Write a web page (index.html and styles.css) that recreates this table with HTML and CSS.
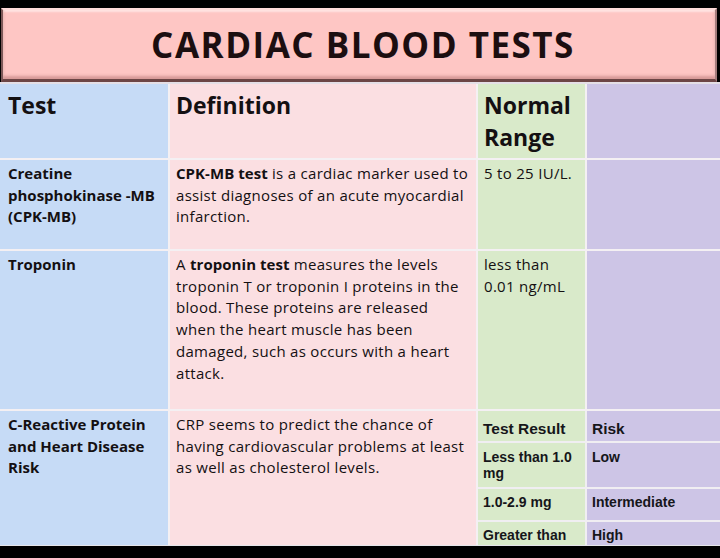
FILE: index.html
```html
<!DOCTYPE html>
<html lang="en">
<head>
<meta charset="utf-8">
<title>Cardiac Blood Tests</title>
<link rel="stylesheet" href="styles.css">
</head>
<body>
<div class="page">
  <div class="title"><h1>CARDIAC BLOOD TESTS</h1></div>
  <div class="table">
    <div class="cell c1 head">Test</div>
    <div class="cell c2 head">Definition</div>
    <div class="cell c3 head">Normal<br>Range</div>
    <div class="cell c4 head"></div>

    <div class="cell c1 name">Creatine<br>phosphokinase -MB<br>(CPK-MB)</div>
    <div class="cell c2 def"><b>CPK-MB test</b> is a cardiac marker used to<br>assist diagnoses of an acute myocardial<br>infarction.</div>
    <div class="cell c3 def">5 to 25 IU/L.</div>
    <div class="cell c4"></div>

    <div class="cell c1 name">Troponin</div>
    <div class="cell c2 def">A <b>troponin test</b> measures the levels<br>troponin T or troponin I proteins in the<br>blood. These proteins are released<br>when the heart muscle has been<br>damaged, such as occurs with a heart<br>attack.</div>
    <div class="cell c3 def">less than<br>0.01 ng/mL</div>
    <div class="cell c4"></div>

    <div class="cell c1 name">C-Reactive Protein<br>and Heart Disease<br>Risk</div>
    <div class="cell c2 def">CRP seems to predict the chance of<br>having cardiovascular problems at least<br>as well as cholesterol levels.</div>
    <div class="sub">
      <div class="scell s3 shead">Test Result</div>
      <div class="scell s4 shead">Risk</div>
      <div class="scell s3 r2">Less than 1.0<br>mg</div>
      <div class="scell s4 r2">Low</div>
      <div class="scell s3 r3">1.0-2.9 mg</div>
      <div class="scell s4 r3">Intermediate</div>
      <div class="scell s3 r4">Greater than</div>
      <div class="scell s4 r4">High</div>
    </div>
  </div>
</div>
</body>
</html>
```
FILE: styles.css
```css
html, body {
  margin: 0;
  padding: 0;
  background: #000;
}
.page {
  width: 720px;
  height: 558px;
  overflow: hidden;
  background: #000;
  font-family: "Open Sans", "Noto Sans", sans-serif;
  color: #141012;
}
.title {
  margin: 8px 3px 0 1px;
  height: 74px;
  box-sizing: border-box;
  background: #fec6c4;
  border-top: 2px solid #ffdcda;
  border-left: 2px solid #7c5858;
  border-right: 2px solid #a47c7c;
  border-bottom: 3px solid #6c4545;
  box-shadow: inset 0 -3px 3px rgba(140, 70, 70, 0.35), inset 0 2px 2px rgba(255, 235, 233, 0.8);
  display: flex;
  align-items: center;
  justify-content: center;
}
.title h1 {
  margin: 0 0 0 8px;
  font-size: 35px;
  line-height: 40px;
  font-weight: 700;
  color: #1c0e10;
  letter-spacing: 1.5px;
}
.table {
  border-top: 2px solid #e4dfe6;
  display: grid;
  grid-template-columns: 168px 306px 107px 133px;
  grid-template-rows: 74px 89px 158px 134px;
  gap: 2px;
  background: #f4f0f3;
  border-bottom: 1px solid #e6e6ea;
}
.cell {
  box-sizing: border-box;
  overflow: hidden;
}
.c1 { background: #c6dbf6; padding-left: 8px; }
.c2 { background: #fbdfe2; padding-left: 6px; }
.c3 { background: #d9eaca; padding-left: 6px; }
.c4 { background: #cdc5e6; }
.head {
  font-size: 23px;
  line-height: 32px;
  font-weight: 700;
  padding-top: 5px;
}
.name, .def {
  font-size: 15px;
  line-height: 21.7px;
  padding-top: 3px;
  white-space: nowrap;
}
.def {
  letter-spacing: 0.3px;
}
.name {
  font-weight: 700;
  letter-spacing: 0;
}
.def b { font-weight: 700; letter-spacing: 0.05px; }
.sub {
  grid-column: 3 / span 2;
  display: grid;
  grid-template-columns: 107px 133px;
  grid-template-rows: 30px 44px 31px 1fr;
  gap: 2px;
  background: #f0eef2;
  overflow: hidden;
  font-family: "Liberation Sans", Arial, sans-serif;
  font-weight: 700;
  color: #16161a;
}
.scell {
  padding-left: 5px;
  font-size: 14px;
  line-height: 15.5px;
  overflow: hidden;
  white-space: nowrap;
}
.s3 { background: #d9eaca; }
.s4 { background: #cdc5e6; }
.shead {
  font-size: 15.5px;
  line-height: 18px;
  padding-top: 9px;
}
.r2 { padding-top: 7px; }
.r3 { padding-top: 6px; }
.r4 { padding-top: 6px; }
```
